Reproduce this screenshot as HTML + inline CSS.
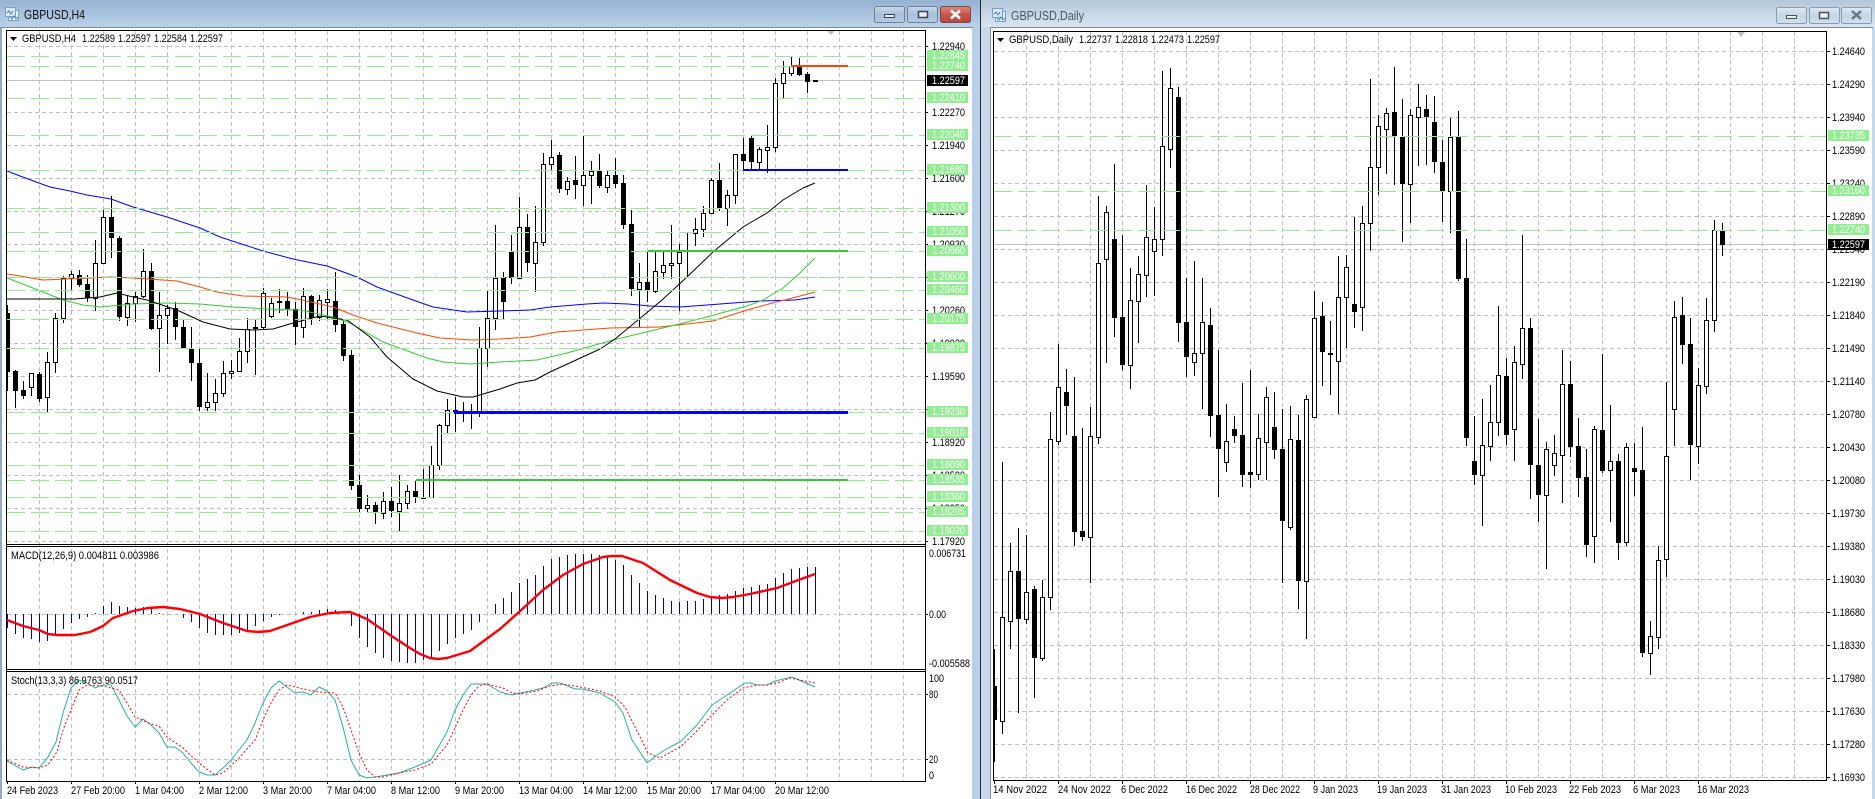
<!DOCTYPE html>
<html><head><meta charset="utf-8"><title>GBPUSD</title>
<style>
html,body{margin:0;padding:0;background:#fff;width:1875px;height:799px;overflow:hidden}
svg{display:block}
text{font-family:"Liberation Sans",Arial,sans-serif;font-size:11px;fill:#000}
.t{font-size:12.5px}
polyline{shape-rendering:auto;stroke-linejoin:round}
</style></head><body>
<svg width="1875" height="799" viewBox="0 0 1875 799" xmlns="http://www.w3.org/2000/svg">
<defs>
<linearGradient id="a" x1="0" y1="0" x2="0" y2="1"><stop offset="0" stop-color="#96b2d2"/><stop offset="1" stop-color="#bbd2ea"/></linearGradient>
<linearGradient id="i" x1="0" y1="0" x2="0" y2="1"><stop offset="0" stop-color="#b4c7d9"/><stop offset="1" stop-color="#d8e6f3"/></linearGradient>
<linearGradient id="b" x1="0" y1="0" x2="0" y2="1"><stop offset="0" stop-color="#c7d8ea"/><stop offset=".5" stop-color="#a9c0da"/><stop offset="1" stop-color="#b5cbe3"/></linearGradient>
<linearGradient id="c" x1="0" y1="0" x2="0" y2="1"><stop offset="0" stop-color="#e08a7e"/><stop offset=".5" stop-color="#c9544a"/><stop offset="1" stop-color="#b8483f"/></linearGradient>
<linearGradient id="d" x1="0" y1="0" x2="0" y2="1"><stop offset="0" stop-color="#e0eaf4"/><stop offset=".5" stop-color="#c3d5e6"/><stop offset="1" stop-color="#d2e1ef"/></linearGradient>
<clipPath id="m"><rect x="7" y="31" width="918" height="513"/></clipPath>
<clipPath id="r"><rect x="994" y="32" width="833" height="748"/></clipPath>
</defs>

<!-- frame background -->
<rect width="1875" height="799" fill="#c8d9ec"/>
<rect x="0" y="0" width="981" height="799" fill="#b7cfe9"/>
<rect x="0" y="0" width="981" height="27" fill="url(#a)"/>
<rect x="981" y="0" width="894" height="27" fill="url(#i)"/>
<rect x="980" y="0" width="1" height="799" fill="#1d2a38"/>
<rect x="0" y="27" width="973" height="1" fill="#7f8a96"/>
<rect x="990" y="27" width="883" height="1" fill="#7f8a96"/>
<rect x="0" y="28" width="2" height="771" fill="#93a9c2"/>
<rect x="2" y="28" width="970" height="771" fill="#fff"/>
<rect x="990" y="28" width="1" height="771" fill="#8a8f96"/>
<rect x="991" y="28" width="881" height="771" fill="#fff"/>
<rect x="1872" y="28" width="3" height="771" fill="#c8d9ec"/>

<!-- LEFT title -->
<g fill="none" stroke="#6f9fd4" shape-rendering="crispEdges"><rect x="8.5" y="10.5" width="10" height="10" fill="#eaf2fb"/><rect x="5.5" y="7.5" width="10" height="9" fill="#dbe8f7"/></g>
<path d="M7 13l2-2 2 3 2-3M10 17l2 2 2-3 2 3 2-2" fill="none" stroke="#4b7db5"/>
<text x="24" y="19" class="t" style="fill:#111" textLength="61" lengthAdjust="spacingAndGlyphs">GBPUSD,H4</text>
<rect x="874.5" y="6.5" width="30" height="16" rx="2" fill="url(#b)" stroke="#6f8297"/>
<rect x="884.5" y="14.5" width="10" height="3" fill="#e8eef5" stroke="#3a4654"/>
<rect x="907.5" y="6.5" width="30" height="16" rx="2" fill="url(#b)" stroke="#6f8297"/>
<rect x="918.5" y="11.5" width="9" height="6" fill="#e8eef5" stroke="#3a4654" stroke-width="1.5"/>
<rect x="940.5" y="6.5" width="30" height="16" rx="2" fill="url(#c)" stroke="#7a4a48"/>
<path d="M951 10.5l9 8M960 10.5l-9 8" stroke="#fff" stroke-width="2.6" fill="none"/>

<!-- RIGHT title -->
<g fill="none" stroke="#6f9fd4" shape-rendering="crispEdges"><rect x="995.5" y="11.5" width="10" height="10" fill="#eaf2fb"/><rect x="992.5" y="8.5" width="10" height="9" fill="#dbe8f7"/></g>
<path d="M994 14l2-2 2 3 2-3M997 18l2 2 2-3 2 3 2-2" fill="none" stroke="#4b7db5"/>
<text x="1011" y="20" class="t" style="fill:#4a5561" textLength="73" lengthAdjust="spacingAndGlyphs">GBPUSD,Daily</text>
<rect x="1776.5" y="7.5" width="30" height="16" rx="2" fill="url(#d)" stroke="#8b9bab"/>
<rect x="1786.5" y="15.5" width="10" height="3" fill="#eef3f8" stroke="#48535f"/>
<rect x="1809.5" y="7.5" width="30" height="16" rx="2" fill="url(#d)" stroke="#8b9bab"/>
<rect x="1819.5" y="12.5" width="9" height="6" fill="#eef3f8" stroke="#48535f" stroke-width="1.5"/>
<rect x="1841.5" y="7.5" width="30" height="16" rx="2" fill="url(#d)" stroke="#8b9bab"/>
<path d="M1852 11l9 8M1861 11l-9 8" stroke="#6a7480" stroke-width="2.4" fill="none"/>

<!-- LEFT GRID -->
<g shape-rendering="crispEdges" fill="none">
<path stroke="#c0c0c0" stroke-dasharray="4 3" d="M39.5 31V781M71.5 31V781M103.5 31V781M135.5 31V781M167.5 31V781M199.5 31V781M231.5 31V781M263.5 31V781M295.5 31V781M327.5 31V781M359.5 31V781M391.5 31V781M423.5 31V781M455.5 31V781M487.5 31V781M519.5 31V781M551.5 31V781M583.5 31V781M615.5 31V781M647.5 31V781M679.5 31V781M711.5 31V781M743.5 31V781M775.5 31V781M807.5 31V781M839.5 31V781M871.5 31V781M903.5 31V781"/>
<path stroke="#c0c0c0" stroke-dasharray="4 3" d="M7 46.5H925M7 112.5H925M7 145.5H925M7 178.5H925M7 211.5H925M7 244.5H925M7 277.5H925M7 310.5H925M7 343.5H925M7 376.5H925M7 409.5H925M7 442.5H925M7 475.5H925M7 508.5H925M7 541.5H925M7 614.5H925M7 694.5H925M7 759.5H925"/>
<path stroke="#c0c0c0" d="M7 80.5H925"/>
</g>

<!-- LEFT CANDLES -->
<g clip-path="url(#m)" shape-rendering="crispEdges" fill="none">
<path stroke="#000" d="M7.5 305V391M15.5 370V408M23.5 381V399M31.5 373V396M39.5 372V402M47.5 352V413M55.5 313V373M63.5 276V323M71.5 271V290M79.5 270V287M87.5 275V302M95.5 240V311M103.5 210V264M111.5 196V258M119.5 236V321M127.5 295V326M135.5 292V322M143.5 249V298M151.5 263V330M159.5 292V372M167.5 305V344M175.5 302V340M183.5 320V349M191.5 327V381M199.5 349V411M207.5 373V411M215.5 379V411M223.5 361V397M231.5 360V379M239.5 338V372M247.5 318V363M255.5 320V375M263.5 288V330M271.5 298V318M279.5 289V313M287.5 292V316M295.5 302V345M303.5 288V338M311.5 295V325M319.5 295V321M327.5 289V320M335.5 272V332M343.5 320V361M351.5 350V490M359.5 475V512M367.5 495V512M375.5 502V524M383.5 492V519M391.5 487V517M399.5 475V531M407.5 485V509M415.5 480V503M423.5 469V499M431.5 446V497M439.5 424V470M447.5 399V433M455.5 397V432M463.5 402V422M471.5 404V429M479.5 327V417M487.5 290V367M495.5 225V330M503.5 272V319M511.5 235V284M519.5 197V278M527.5 214V272M535.5 206V292M543.5 153V246M551.5 140V170M559.5 152V193M567.5 177V195M575.5 156V199M583.5 136V206M591.5 161V204M599.5 154V188M607.5 170V193M615.5 158V188M623.5 175V229M631.5 210V296M639.5 263V327M647.5 252V302M655.5 252V293M663.5 252V279M671.5 225V279M679.5 244V311M687.5 233V277M695.5 218V246M703.5 206V237M711.5 178V213M719.5 163V211M727.5 190V226M735.5 154V204M743.5 138V170M751.5 136V170M759.5 147V170M767.5 125V173M775.5 78V152M783.5 61V99M791.5 57V76M799.5 58V76M807.5 72V93"/>
<path stroke="#000" stroke-width="5" d="M7.5 313V372M15.5 371V391M23.5 390V396M39.5 374V399M79.5 275V285M87.5 284V298M111.5 217V238M119.5 238V317M151.5 271V329M175.5 308V327M183.5 327V348M191.5 349V363M199.5 363V407M255.5 327V329M279.5 301V303M287.5 301V309M295.5 309V327M311.5 296V318M335.5 301V325M343.5 324V356M351.5 355V486M359.5 485V509M375.5 505V512M391.5 501V511M415.5 491V497M455.5 410V412M503.5 277V302M511.5 252V278M527.5 227V263M559.5 155V189M575.5 180V185M599.5 171V186M615.5 175V184M623.5 183V225M631.5 224V289M647.5 282V290M719.5 180V208M743.5 154V161M751.5 138V162M799.5 66V75M807.5 74V82"/>
<path stroke="#000" stroke-width="2" d="M813 81H818"/>
<path fill="#fff" stroke="#000" d="M29.5 373.5h4v14h-4zM45.5 362.5h4v35h-4zM53.5 318.5h4v44h-4zM61.5 278.5h4v40h-4zM69.5 274.5h4v4h-4zM93.5 263.5h4v35h-4zM101.5 217.5h4v46h-4zM125.5 303.5h4v14h-4zM133.5 296.5h4v7h-4zM141.5 271.5h4v25h-4zM157.5 315.5h4v13h-4zM165.5 308.5h4v7h-4zM205.5 402.5h4v5h-4zM213.5 393.5h4v9h-4zM221.5 373.5h4v20h-4zM229.5 371.5h4v2h-4zM237.5 351.5h4v20h-4zM245.5 329.5h4v22h-4zM261.5 293.5h4v34h-4zM269.5 303.5h4v13h-4zM301.5 296.5h4v31h-4zM317.5 300.5h4v17h-4zM325.5 299.5h4v3h-4zM365.5 505.5h4v3h-4zM381.5 501.5h4v12h-4zM397.5 503.5h4v8h-4zM405.5 491.5h4v12h-4zM421.5 497.5h4v1h-4zM429.5 465.5h4v32h-4zM437.5 425.5h4v40h-4zM445.5 410.5h4v15h-4zM477.5 348.5h4v64h-4zM485.5 318.5h4v30h-4zM493.5 278.5h4v40h-4zM517.5 227.5h4v51h-4zM533.5 242.5h4v21h-4zM541.5 164.5h4v78h-4zM549.5 157.5h4v7h-4zM565.5 181.5h4v8h-4zM581.5 175.5h4v10h-4zM589.5 171.5h4v4h-4zM605.5 175.5h4v12h-4zM637.5 282.5h4v7h-4zM653.5 271.5h4v20h-4zM661.5 265.5h4v7h-4zM669.5 263.5h4v2h-4zM677.5 252.5h4v11h-4zM693.5 229.5h4v4h-4zM701.5 213.5h4v16h-4zM709.5 180.5h4v33h-4zM725.5 195.5h4v13h-4zM733.5 154.5h4v41h-4zM757.5 149.5h4v13h-4zM765.5 147.5h4v3h-4zM773.5 83.5h4v64h-4zM781.5 73.5h4v10h-4zM789.5 66.5h4v7h-4z"/>
<polyline stroke="#0000ff" points="7,171 20,176 39,183 50,187 70,191 87,195 111,199 133,207 167,217 200,228 220,237 263,251 293,259 327,266 357,277 377,287 413,300 433,307 467,312 500,311 530,310 550,307 587,304 603,303 628,304 650,306 680,307 707,305 733,303 760,301 795,300 815,297"/>
<polyline stroke="#ff4500" points="7,274 20,276 43,280 67,279 90,278 110,277 133,278 177,281 200,287 217,292 243,296 287,297 302,300 333,307 353,315 377,323 417,333 440,338 473,340 500,339 530,337 557,332 610,328 660,327 713,321 747,310 780,301 785,300 815,292"/>
<polyline stroke="#32cd32" points="7,278 20,283 43,292 63,300 83,305 100,307 133,304 167,303 200,304 233,307 267,309 300,310 333,317 350,323 383,342 427,358 443,362 470,364 500,362 537,360 567,353 613,340 667,327 707,317 750,305 763,300 783,288 800,273 815,258"/>
<polyline stroke="#000" points="7,299 40,299 75,299 100,297 117,293 133,297 147,300 177,310 203,322 230,329 253,330 273,329 293,323 320,316 347,320 370,337 387,357 413,379 437,391 463,397 473,397 500,389 517,383 535,380 550,372 600,349 615,339 638,320 662,300 687,277 713,252 743,227 767,213 783,200 803,188 815,183"/>
</g>

<!-- LEFT GREEN LINES + OBJECTS -->
<g shape-rendering="crispEdges" fill="none">
<path stroke="#90ee90" stroke-dasharray="18 6" d="M7 56.5H925M7 66.5H925M7 98.5H925M7 135.5H925M7 170.5H925M7 208.5H925M7 232.5H925M7 251.5H925M7 277.5H925M7 290.5H925M7 319.5H925M7 348.5H925M7 412.5H925M7 433.5H925M7 465.5H925M7 480.5H925M7 497.5H925M7 512.5H925M7 531.5H925"/>
<path stroke="#ff4500" stroke-width="2" d="M791 66H848"/>
<path stroke="#0000ff" stroke-width="2" d="M743 170H848"/>
<path stroke="#32cd32" stroke-width="2" d="M648 251H848"/>
<path stroke="#0000ff" stroke-width="3" d="M454 412.5H848"/>
<path stroke="#32cd32" stroke-width="2" d="M416 480H848"/>
</g>
<path d="M827 31h8l-4 4z" fill="#c0c0c0"/>

<!-- MACD -->
<g shape-rendering="crispEdges" fill="none">
<path stroke="#0000cd" d="M7.5 614V628M15.5 614V634M23.5 614V638M31.5 614V639M39.5 614V642M47.5 614V641M55.5 614V634M63.5 614V629M71.5 614V623M79.5 614V619M87.5 614V617M95.5 614V613M103.5 614V606M111.5 614V602M119.5 614V606M127.5 614V607M135.5 614V608M143.5 614V607M151.5 614V608M159.5 614V613M183.5 614V618M191.5 614V622M199.5 614V628M207.5 614V633M215.5 614V635M223.5 614V635M231.5 614V635M239.5 614V633M247.5 614V630M255.5 614V626M263.5 614V621M271.5 614V617M279.5 614V615M303.5 614V612M311.5 614V612M319.5 614V610M327.5 614V609M335.5 614V610M351.5 614V626M359.5 614V638M367.5 614V647M375.5 614V653M383.5 614V658M391.5 614V661M399.5 614V662M407.5 614V663M415.5 614V663M423.5 614V660M431.5 614V658M439.5 614V651M447.5 614V644M455.5 614V638M463.5 614V634M471.5 614V630M479.5 614V622M495.5 614V604M503.5 614V598M511.5 614V592M519.5 614V583M527.5 614V579M535.5 614V575M543.5 614V566M551.5 614V559M559.5 614V557M567.5 614V555M575.5 614V554M583.5 614V554M591.5 614V554M599.5 614V555M607.5 614V556M615.5 614V560M623.5 614V565M631.5 614V575M639.5 614V583M647.5 614V591M655.5 614V595M663.5 614V598M671.5 614V601M679.5 614V602M687.5 614V601M695.5 614V601M703.5 614V599M711.5 614V597M719.5 614V595M727.5 614V594M735.5 614V591M743.5 614V588M751.5 614V587M759.5 614V585M767.5 614V584M775.5 614V578M783.5 614V573M791.5 614V569M799.5 614V568M807.5 614V567M815.5 614V567"/>
<polyline stroke="#ff0000" stroke-width="2.4" points="7,620 23,626 39,630 48,634 57,635 75,635 90,632 103,626 113,618 133,611 148,608 163,607 180,609 200,614 223,623 247,631 258,632 270,631 290,624 310,617 330,613 350,612 367,619 390,635 410,648 420,654 430,658 438,659 447,658 470,651 500,629 518,613 543,590 563,575 583,564 603,557 612,556 622,556 643,563 670,580 697,593 710,597 722,598 733,597 750,594 777,588 793,582 815,574"/>
<!-- STOCH -->
<polyline stroke="#20b2aa" points="7,761 23,770 32,767 39,768 48,757 56,742 63,713 71,688 79,680 87,683 95,688 103,685 111,685 119,700 127,716 135,727 143,719 151,725 159,733 167,747 175,747 183,753 191,763 199,772 207,775 215,775 223,768 231,760 247,740 255,723 263,703 271,688 279,681 287,687 295,693 303,692 311,695 319,687 327,691 335,700 343,727 351,760 359,775 367,778 375,777 399,773 415,767 431,760 447,732 455,710 463,695 471,684 487,684 500,692 512,695 520,693 530,691 543,688 552,683 560,683 575,689 583,689 600,693 615,702 623,713 632,740 647,763 657,755 670,747 680,742 697,725 712,705 727,695 745,683 750,683 757,685 767,685 775,681 792,677 815,687"/>
<polyline stroke="#ff0000" stroke-dasharray="2 2" points="7,760 23,767 39,768 48,765 57,752 63,730 71,710 79,690 87,685 103,686 119,690 127,703 135,717 151,724 159,726 167,737 183,748 199,763 215,775 223,773 239,758 255,740 263,720 271,703 279,690 287,685 303,689 319,692 335,693 343,707 351,730 359,753 367,770 375,777 383,777 399,773 415,770 431,764 447,745 455,728 463,710 471,695 479,686 487,684 503,688 512,693 520,694 537,691 550,686 563,684 580,687 600,691 615,697 625,707 633,723 648,753 660,758 680,747 693,735 712,715 727,700 743,688 757,685 767,685 780,682 790,678 815,683"/>
<!-- frames -->
<path stroke="#000" d="M6.5 30.5H925.5V781.5H6.5ZM6.5 544.5H925.5M6.5 546.5H925.5M6.5 669.5H925.5M6.5 671.5H925.5"/>
<path stroke="#000" d="M925 46.5h3M925 112.5h3M925 145.5h3M925 178.5h3M925 211.5h3M925 244.5h3M925 277.5h3M925 310.5h3M925 343.5h3M925 376.5h3M925 409.5h3M925 442.5h3M925 475.5h3M925 508.5h3M925 541.5h3M925 614.5h3M925 694.5h3M925 759.5h3M7.5 781v3M71.5 781v3M135.5 781v3M199.5 781v3M263.5 781v3M327.5 781v3M391.5 781v3M455.5 781v3M519.5 781v3M583.5 781v3M647.5 781v3M711.5 781v3M775.5 781v3"/>
</g>

<!-- LEFT LABELS -->
<path d="M10 37h7l-3.5 4z" fill="#000"/>
<text x="22" y="42" textLength="54" lengthAdjust="spacingAndGlyphs">GBPUSD,H4</text>
<text x="82" y="42" textLength="33" lengthAdjust="spacingAndGlyphs">1.22589</text>
<text x="118" y="42" textLength="33" lengthAdjust="spacingAndGlyphs">1.22597</text>
<text x="154" y="42" textLength="33" lengthAdjust="spacingAndGlyphs">1.22584</text>
<text x="190" y="42" textLength="33" lengthAdjust="spacingAndGlyphs">1.22597</text>
<text x="11" y="559" textLength="148" lengthAdjust="spacingAndGlyphs">MACD(12,26,9) 0.004811 0.003986</text>
<text x="11" y="684" textLength="127" lengthAdjust="spacingAndGlyphs">Stoch(13,3,3) 86.9763 90.0517</text>
<g>
<text x="932" y="50" textLength="33" lengthAdjust="spacingAndGlyphs">1.22940</text>
<text x="932" y="116" textLength="33" lengthAdjust="spacingAndGlyphs">1.22270</text>
<text x="932" y="149" textLength="33" lengthAdjust="spacingAndGlyphs">1.21940</text>
<text x="932" y="182" textLength="33" lengthAdjust="spacingAndGlyphs">1.21600</text>
<text x="932" y="215" textLength="33" lengthAdjust="spacingAndGlyphs">1.21270</text>
<text x="932" y="248" textLength="33" lengthAdjust="spacingAndGlyphs">1.20930</text>
<text x="932" y="314" textLength="33" lengthAdjust="spacingAndGlyphs">1.20260</text>
<text x="932" y="347" textLength="33" lengthAdjust="spacingAndGlyphs">1.19920</text>
<text x="932" y="380" textLength="33" lengthAdjust="spacingAndGlyphs">1.19590</text>
<text x="932" y="446" textLength="33" lengthAdjust="spacingAndGlyphs">1.18920</text>
<text x="932" y="479" textLength="33" lengthAdjust="spacingAndGlyphs">1.18580</text>
<text x="932" y="512" textLength="33" lengthAdjust="spacingAndGlyphs">1.18250</text>
<text x="932" y="545" textLength="33" lengthAdjust="spacingAndGlyphs">1.17920</text>
<text x="929" y="557" textLength="37" lengthAdjust="spacingAndGlyphs">0.006731</text>
<text x="929" y="618" textLength="17" lengthAdjust="spacingAndGlyphs">0.00</text>
<text x="929" y="667" textLength="41" lengthAdjust="spacingAndGlyphs">-0.005588</text>
<text x="929" y="682" textLength="15" lengthAdjust="spacingAndGlyphs">100</text>
<text x="929" y="698" textLength="9" lengthAdjust="spacingAndGlyphs">80</text>
<text x="929" y="763" textLength="9" lengthAdjust="spacingAndGlyphs">20</text>
<text x="929" y="779" textLength="5" lengthAdjust="spacingAndGlyphs">0</text>
</g>
<g fill="#90ee90" shape-rendering="crispEdges">
<rect x="927" y="50" width="41" height="21"/><rect x="927" y="92" width="41" height="11"/><rect x="927" y="129" width="41" height="11"/><rect x="927" y="164" width="41" height="11"/><rect x="927" y="202" width="41" height="11"/><rect x="927" y="226" width="41" height="11"/><rect x="927" y="245" width="41" height="11"/><rect x="927" y="271" width="41" height="11"/><rect x="927" y="284" width="41" height="11"/><rect x="927" y="313" width="41" height="11"/><rect x="927" y="342" width="41" height="11"/><rect x="927" y="406" width="41" height="11"/><rect x="927" y="427" width="41" height="11"/><rect x="927" y="459" width="41" height="11"/><rect x="927" y="474" width="41" height="11"/><rect x="927" y="491" width="41" height="11"/><rect x="927" y="506" width="41" height="11"/><rect x="927" y="525" width="41" height="11"/>
</g>
<rect x="927" y="75" width="41" height="11" fill="#000" shape-rendering="crispEdges"/>
<g>
<text style="fill:#fff" x="932" y="59" textLength="33" lengthAdjust="spacingAndGlyphs">1.22845</text>
<text style="fill:#fff" x="932" y="69" textLength="33" lengthAdjust="spacingAndGlyphs">1.22740</text>
<text style="fill:#fff" x="932" y="84" textLength="33" lengthAdjust="spacingAndGlyphs">1.22597</text>
<text style="fill:#fff" x="932" y="101" textLength="33" lengthAdjust="spacingAndGlyphs">1.22410</text>
<text style="fill:#fff" x="932" y="138" textLength="33" lengthAdjust="spacingAndGlyphs">1.22040</text>
<text style="fill:#fff" x="932" y="173" textLength="33" lengthAdjust="spacingAndGlyphs">1.21680</text>
<text style="fill:#fff" x="932" y="211" textLength="33" lengthAdjust="spacingAndGlyphs">1.21300</text>
<text style="fill:#fff" x="932" y="235" textLength="33" lengthAdjust="spacingAndGlyphs">1.21050</text>
<text style="fill:#fff" x="932" y="254" textLength="33" lengthAdjust="spacingAndGlyphs">1.20860</text>
<text style="fill:#fff" x="932" y="280" textLength="33" lengthAdjust="spacingAndGlyphs">1.20600</text>
<text style="fill:#fff" x="932" y="293" textLength="33" lengthAdjust="spacingAndGlyphs">1.20460</text>
<text style="fill:#fff" x="932" y="322" textLength="33" lengthAdjust="spacingAndGlyphs">1.20175</text>
<text style="fill:#fff" x="932" y="351" textLength="33" lengthAdjust="spacingAndGlyphs">1.19875</text>
<text style="fill:#fff" x="932" y="415" textLength="33" lengthAdjust="spacingAndGlyphs">1.19230</text>
<text style="fill:#fff" x="932" y="436" textLength="33" lengthAdjust="spacingAndGlyphs">1.19010</text>
<text style="fill:#fff" x="932" y="468" textLength="33" lengthAdjust="spacingAndGlyphs">1.18690</text>
<text style="fill:#fff" x="932" y="483" textLength="33" lengthAdjust="spacingAndGlyphs">1.18535</text>
<text style="fill:#fff" x="932" y="500" textLength="33" lengthAdjust="spacingAndGlyphs">1.18360</text>
<text style="fill:#fff" x="932" y="515" textLength="33" lengthAdjust="spacingAndGlyphs">1.18205</text>
<text style="fill:#fff" x="932" y="534" textLength="33" lengthAdjust="spacingAndGlyphs">1.18020</text>
</g>
<g>
<text x="7" y="794" textLength="51" lengthAdjust="spacingAndGlyphs">24 Feb 2023</text>
<text x="71" y="794" textLength="54" lengthAdjust="spacingAndGlyphs">27 Feb 20:00</text>
<text x="135" y="794" textLength="49" lengthAdjust="spacingAndGlyphs">1 Mar 04:00</text>
<text x="199" y="794" textLength="49" lengthAdjust="spacingAndGlyphs">2 Mar 12:00</text>
<text x="263" y="794" textLength="49" lengthAdjust="spacingAndGlyphs">3 Mar 20:00</text>
<text x="327" y="794" textLength="49" lengthAdjust="spacingAndGlyphs">7 Mar 04:00</text>
<text x="391" y="794" textLength="49" lengthAdjust="spacingAndGlyphs">8 Mar 12:00</text>
<text x="455" y="794" textLength="49" lengthAdjust="spacingAndGlyphs">9 Mar 20:00</text>
<text x="519" y="794" textLength="54" lengthAdjust="spacingAndGlyphs">13 Mar 04:00</text>
<text x="583" y="794" textLength="54" lengthAdjust="spacingAndGlyphs">14 Mar 12:00</text>
<text x="647" y="794" textLength="54" lengthAdjust="spacingAndGlyphs">15 Mar 20:00</text>
<text x="711" y="794" textLength="54" lengthAdjust="spacingAndGlyphs">17 Mar 04:00</text>
<text x="775" y="794" textLength="54" lengthAdjust="spacingAndGlyphs">20 Mar 12:00</text>
</g>

<!-- RIGHT GRID -->
<g shape-rendering="crispEdges" fill="none">
<path stroke="#c0c0c0" stroke-dasharray="4 3" d="M1026.5 32V780M1058.5 32V780M1090.5 32V780M1122.5 32V780M1154.5 32V780M1186.5 32V780M1218.5 32V780M1250.5 32V780M1282.5 32V780M1314.5 32V780M1346.5 32V780M1378.5 32V780M1410.5 32V780M1442.5 32V780M1474.5 32V780M1506.5 32V780M1538.5 32V780M1570.5 32V780M1602.5 32V780M1634.5 32V780M1666.5 32V780M1698.5 32V780M1730.5 32V780M1762.5 32V780M1794.5 32V780"/>
<path stroke="#c0c0c0" stroke-dasharray="4 3" d="M994 51.5H1827M994 84.5H1827M994 117.5H1827M994 150.5H1827M994 183.5H1827M994 216.5H1827M994 249.5H1827M994 282.5H1827M994 315.5H1827M994 348.5H1827M994 381.5H1827M994 414.5H1827M994 447.5H1827M994 480.5H1827M994 513.5H1827M994 546.5H1827M994 579.5H1827M994 612.5H1827M994 645.5H1827M994 678.5H1827M994 711.5H1827M994 744.5H1827M994 777.5H1827"/>
<path stroke="#c0c0c0" d="M994 244.5H1827"/>
</g>

<!-- RIGHT CANDLES -->
<g clip-path="url(#r)" shape-rendering="crispEdges" fill="none">
<path stroke="#000" d="M994.5 649V762M1002.5 462V734M1010.5 543V649M1018.5 528V713M1026.5 535V624M1034.5 586V698M1042.5 580V661M1050.5 412V610M1058.5 344V445M1066.5 369V435M1074.5 377V546M1082.5 428V541M1090.5 407V583M1098.5 196V444M1106.5 206V363M1114.5 164V337M1122.5 235V370M1130.5 268V389M1138.5 256V343M1146.5 185V297M1154.5 207V296M1162.5 71V256M1170.5 68V168M1178.5 87V342M1186.5 278V377M1194.5 261V376M1202.5 278V409M1210.5 308V437M1218.5 350V497M1226.5 404V472M1234.5 416V443M1242.5 383V487M1250.5 370V488M1258.5 414V480M1266.5 387V480M1274.5 392V459M1282.5 409V583M1290.5 406V530M1298.5 415V609M1306.5 395V639M1314.5 291V417M1322.5 302V386M1330.5 321V395M1338.5 256V414M1346.5 255V348M1354.5 217V328M1362.5 206V331M1370.5 79V251M1378.5 115V195M1386.5 108V174M1394.5 67V185M1402.5 99V242M1410.5 109V223M1418.5 84V166M1426.5 95V165M1434.5 96V173M1442.5 140V222M1450.5 118V233M1458.5 111V281M1466.5 239V446M1474.5 416V485M1482.5 399V526M1490.5 385V461M1498.5 306V436M1506.5 358V445M1514.5 346V461M1522.5 235V379M1530.5 318V499M1538.5 419V522M1546.5 442V569M1554.5 435V476M1562.5 350V503M1570.5 361V457M1578.5 418V497M1586.5 449V557M1594.5 426V563M1602.5 354V473M1610.5 405V522M1618.5 454V560M1626.5 443V546M1634.5 443V496M1642.5 427V657M1650.5 621V675M1658.5 546V649M1666.5 382V577M1674.5 301V446M1682.5 297V364M1690.5 318V480M1698.5 368V464M1706.5 298V394M1714.5 220V332M1722.5 223V256"/>
<path stroke="#000" stroke-width="5" d="M994.5 686V720M1018.5 571V619M1034.5 589V658M1066.5 392V406M1074.5 436V532M1082.5 531V537M1114.5 239V318M1122.5 317V365M1178.5 97V323M1186.5 322V357M1210.5 325V416M1218.5 415V449M1234.5 429V436M1242.5 435V475M1250.5 472V475M1274.5 427V450M1282.5 449V521M1298.5 440V581M1322.5 316V352M1330.5 353V355M1354.5 304V312M1394.5 112V136M1402.5 137V184M1426.5 109V117M1434.5 122V162M1442.5 162V191M1458.5 137V279M1466.5 278V438M1474.5 461V475M1506.5 376V435M1530.5 328V465M1538.5 465V495M1570.5 384V447M1578.5 446V478M1586.5 477V545M1602.5 430V471M1618.5 461V543M1634.5 468V472M1642.5 470V653M1682.5 315V345M1690.5 344V445M1722.5 231V245"/>
<path fill="#fff" stroke="#000" d="M1000.5 617.5h4v104h-4zM1008.5 571.5h4v50h-4zM1024.5 592.5h4v27h-4zM1040.5 597.5h4v61h-4zM1048.5 439.5h4v158h-4zM1056.5 387.5h4v54h-4zM1088.5 436.5h4v101h-4zM1096.5 263.5h4v174h-4zM1104.5 212.5h4v47h-4zM1128.5 300.5h4v65h-4zM1136.5 274.5h4v27h-4zM1144.5 237.5h4v38h-4zM1152.5 239.5h4v12h-4zM1160.5 146.5h4v93h-4zM1168.5 88.5h4v61h-4zM1192.5 353.5h4v9h-4zM1200.5 322.5h4v31h-4zM1224.5 441.5h4v21h-4zM1256.5 438.5h4v36h-4zM1264.5 397.5h4v45h-4zM1288.5 439.5h4v88h-4zM1304.5 399.5h4v182h-4zM1312.5 318.5h4v99h-4zM1336.5 297.5h4v64h-4zM1344.5 267.5h4v30h-4zM1360.5 223.5h4v84h-4zM1368.5 167.5h4v56h-4zM1376.5 126.5h4v41h-4zM1384.5 113.5h4v16h-4zM1408.5 115.5h4v69h-4zM1416.5 107.5h4v10h-4zM1448.5 137.5h4v54h-4zM1480.5 445.5h4v30h-4zM1488.5 422.5h4v24h-4zM1496.5 375.5h4v47h-4zM1512.5 362.5h4v67h-4zM1520.5 328.5h4v36h-4zM1544.5 449.5h4v46h-4zM1552.5 453.5h4v12h-4zM1560.5 384.5h4v71h-4zM1592.5 429.5h4v107h-4zM1608.5 461.5h4v9h-4zM1624.5 447.5h4v95h-4zM1648.5 636.5h4v17h-4zM1656.5 560.5h4v77h-4zM1664.5 456.5h4v103h-4zM1672.5 317.5h4v92h-4zM1696.5 385.5h4v61h-4zM1704.5 320.5h4v66h-4zM1712.5 230.5h4v90h-4z"/>
</g>

<g shape-rendering="crispEdges" fill="none">
<path stroke="#90ee90" stroke-dasharray="18 6" d="M994 136.5H1827M994 191.5H1827M994 230.5H1827"/>
<path stroke="#000" d="M993.5 31.5H1826.5V780.5H993.5Z"/>
<path stroke="#000" d="M1827 51.5h3M1827 84.5h3M1827 117.5h3M1827 150.5h3M1827 183.5h3M1827 216.5h3M1827 249.5h3M1827 282.5h3M1827 315.5h3M1827 348.5h3M1827 381.5h3M1827 414.5h3M1827 447.5h3M1827 480.5h3M1827 513.5h3M1827 546.5h3M1827 579.5h3M1827 612.5h3M1827 645.5h3M1827 678.5h3M1827 711.5h3M1827 744.5h3M1827 777.5h3M994.5 781v3M1058.5 781v3M1122.5 781v3M1186.5 781v3M1250.5 781v3M1314.5 781v3M1378.5 781v3M1442.5 781v3M1506.5 781v3M1570.5 781v3M1634.5 781v3M1698.5 781v3"/>
</g>
<path d="M1737 32h8l-4 5z" fill="#c0c0c0"/>

<!-- RIGHT LABELS -->
<path d="M997 38h7l-3.5 4z" fill="#000"/>
<text x="1009" y="43" textLength="64" lengthAdjust="spacingAndGlyphs">GBPUSD,Daily</text>
<text x="1079" y="43" textLength="33" lengthAdjust="spacingAndGlyphs">1.22737</text>
<text x="1115" y="43" textLength="33" lengthAdjust="spacingAndGlyphs">1.22818</text>
<text x="1151" y="43" textLength="33" lengthAdjust="spacingAndGlyphs">1.22473</text>
<text x="1187" y="43" textLength="33" lengthAdjust="spacingAndGlyphs">1.22597</text>
<g>
<text x="1832" y="55" textLength="33" lengthAdjust="spacingAndGlyphs">1.24640</text>
<text x="1832" y="88" textLength="33" lengthAdjust="spacingAndGlyphs">1.24290</text>
<text x="1832" y="121" textLength="33" lengthAdjust="spacingAndGlyphs">1.23940</text>
<text x="1832" y="154" textLength="33" lengthAdjust="spacingAndGlyphs">1.23590</text>
<text x="1832" y="187" textLength="33" lengthAdjust="spacingAndGlyphs">1.23240</text>
<text x="1832" y="220" textLength="33" lengthAdjust="spacingAndGlyphs">1.22890</text>
<text x="1832" y="253" textLength="33" lengthAdjust="spacingAndGlyphs">1.22540</text>
<text x="1832" y="286" textLength="33" lengthAdjust="spacingAndGlyphs">1.22190</text>
<text x="1832" y="319" textLength="33" lengthAdjust="spacingAndGlyphs">1.21840</text>
<text x="1832" y="352" textLength="33" lengthAdjust="spacingAndGlyphs">1.21490</text>
<text x="1832" y="385" textLength="33" lengthAdjust="spacingAndGlyphs">1.21140</text>
<text x="1832" y="418" textLength="33" lengthAdjust="spacingAndGlyphs">1.20780</text>
<text x="1832" y="451" textLength="33" lengthAdjust="spacingAndGlyphs">1.20430</text>
<text x="1832" y="484" textLength="33" lengthAdjust="spacingAndGlyphs">1.20080</text>
<text x="1832" y="517" textLength="33" lengthAdjust="spacingAndGlyphs">1.19730</text>
<text x="1832" y="550" textLength="33" lengthAdjust="spacingAndGlyphs">1.19380</text>
<text x="1832" y="583" textLength="33" lengthAdjust="spacingAndGlyphs">1.19030</text>
<text x="1832" y="616" textLength="33" lengthAdjust="spacingAndGlyphs">1.18680</text>
<text x="1832" y="649" textLength="33" lengthAdjust="spacingAndGlyphs">1.18330</text>
<text x="1832" y="682" textLength="33" lengthAdjust="spacingAndGlyphs">1.17980</text>
<text x="1832" y="715" textLength="33" lengthAdjust="spacingAndGlyphs">1.17630</text>
<text x="1832" y="748" textLength="33" lengthAdjust="spacingAndGlyphs">1.17280</text>
<text x="1832" y="781" textLength="33" lengthAdjust="spacingAndGlyphs">1.16930</text>
</g>
<g fill="#90ee90" shape-rendering="crispEdges"><rect x="1828" y="130" width="41" height="11"/><rect x="1828" y="185" width="41" height="11"/><rect x="1828" y="224" width="41" height="11"/></g>
<rect x="1828" y="239" width="41" height="11" fill="#000" shape-rendering="crispEdges"/>
<text style="fill:#fff" x="1832" y="139" textLength="33" lengthAdjust="spacingAndGlyphs">1.23735</text>
<text style="fill:#fff" x="1832" y="194" textLength="33" lengthAdjust="spacingAndGlyphs">1.23160</text>
<text style="fill:#fff" x="1832" y="233" textLength="33" lengthAdjust="spacingAndGlyphs">1.22740</text>
<text style="fill:#fff" x="1832" y="248" textLength="33" lengthAdjust="spacingAndGlyphs">1.22597</text>
<g>
<text x="993" y="793" textLength="54" lengthAdjust="spacingAndGlyphs">14 Nov 2022</text>
<text x="1058" y="793" textLength="53" lengthAdjust="spacingAndGlyphs">24 Nov 2022</text>
<text x="1121" y="793" textLength="47" lengthAdjust="spacingAndGlyphs">6 Dec 2022</text>
<text x="1186" y="793" textLength="51" lengthAdjust="spacingAndGlyphs">16 Dec 2022</text>
<text x="1250" y="793" textLength="50" lengthAdjust="spacingAndGlyphs">28 Dec 2022</text>
<text x="1313" y="793" textLength="45" lengthAdjust="spacingAndGlyphs">9 Jan 2023</text>
<text x="1377" y="793" textLength="50" lengthAdjust="spacingAndGlyphs">19 Jan 2023</text>
<text x="1441" y="793" textLength="50" lengthAdjust="spacingAndGlyphs">31 Jan 2023</text>
<text x="1505" y="793" textLength="52" lengthAdjust="spacingAndGlyphs">10 Feb 2023</text>
<text x="1569" y="793" textLength="52" lengthAdjust="spacingAndGlyphs">22 Feb 2023</text>
<text x="1633" y="793" textLength="47" lengthAdjust="spacingAndGlyphs">6 Mar 2023</text>
<text x="1697" y="793" textLength="52" lengthAdjust="spacingAndGlyphs">16 Mar 2023</text>
</g>
</svg>
</body></html>
